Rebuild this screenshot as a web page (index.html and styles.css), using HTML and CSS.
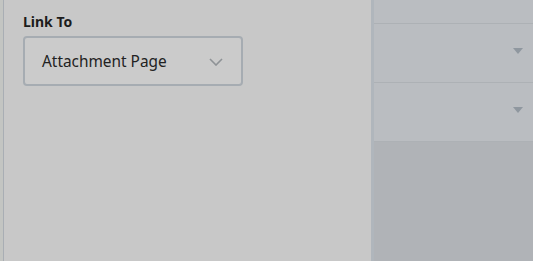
FILE: index.html
```html
<!DOCTYPE html>
<html lang="en">
<head>
  <meta charset="UTF-8">
  <title>Link To</title>
  <link rel="stylesheet" href="styles.css">
</head>
<body>
  <div class="edge"></div>
  <div class="panel">
    <label class="field-label">Link To</label>
    <div class="select">
      <span class="select-value">Attachment Page</span>
      <svg class="chevron" width="14" height="8" viewBox="0 0 14 8">
        <path d="M1 1 L7 7 L13 1" fill="none" stroke="#8e9296" stroke-width="1.6"/>
      </svg>
    </div>
  </div>
  <div class="side">
    <div class="row row-top"></div>
    <div class="row"><span class="caret"></span></div>
    <div class="row"><span class="caret"></span></div>
    <div class="rest"></div>
  </div>
</body>
</html>
```

FILE: styles.css
```css
html, body {
  height: 100%;
}

body {
  margin: 0;
  display: flex;
  background: #c8c8c8;
  font-family: "Noto Sans", "Open Sans", sans-serif;
  overflow: hidden;
}

/* Thin strip at the far left */
.edge {
  width: 3px;
  background: #c3c5c2;
  border-right: 1px solid #a9aeb4;
}

.panel {
  width: 370px;
  padding: 13px 19px;
  box-sizing: border-box;
  background: #c8c8c8;
  border-right: 3px solid #b0b6bc;
  display: flex;
  flex-direction: column;
  align-items: flex-start;
}

.field-label {
  font-size: 14px;
  font-weight: 700;
  color: #1c1c1c;
  line-height: 17px;
  margin-bottom: 6px;
}

.select {
  width: 220px;
  height: 50px;
  box-sizing: border-box;
  border: 2px solid #a6acb2;
  border-radius: 4px;
  background: #cbcbcb;
  display: flex;
  align-items: center;
  justify-content: space-between;
  padding: 0 18px 0 17px;
}

.select-value {
  font-size: 15.4px;
  color: #222;
}

.chevron {
  margin-top: 1px;
}

/* Dimmed settings column on the right */
.side {
  flex: 1;
  display: flex;
  flex-direction: column;
  background: #b0b3b7;
}

.row {
  height: 58px;
  background: #babdc1;
  border-bottom: 1px solid #adb1b5;
  display: flex;
  align-items: center;
  justify-content: flex-end;
  padding-right: 10px;
}

.row-top {
  height: 23px;
}

.caret {
  width: 0;
  height: 0;
  border-left: 5px solid transparent;
  border-right: 5px solid transparent;
  border-top: 6px solid #8f979f;
  margin-top: -4px;
}

.rest {
  flex: 1;
}
```
